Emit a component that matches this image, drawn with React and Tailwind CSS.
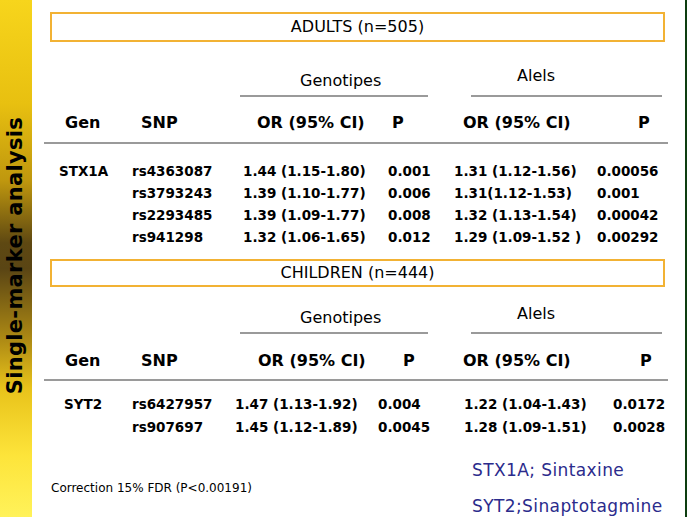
import React from 'react';

const adults = [
  ['STX1A', 'rs4363087', '1.44 (1.15-1.80)', '0.001', '1.31 (1.12-1.56)', '0.00056'],
  ['', 'rs3793243', '1.39 (1.10-1.77)', '0.006', '1.31(1.12-1.53)', '0.001'],
  ['', 'rs2293485', '1.39 (1.09-1.77)', '0.008', '1.32 (1.13-1.54)', '0.00042'],
  ['', 'rs941298', '1.32 (1.06-1.65)', '0.012', '1.29 (1.09-1.52 )', '0.00292'],
];

const children = [
  ['SYT2', 'rs6427957', '1.47 (1.13-1.92)', '0.004', '1.22 (1.04-1.43)', '0.0172'],
  ['', 'rs907697', '1.45 (1.12-1.89)', '0.0045', '1.28 (1.09-1.51)', '0.0028'],
];

const cols = 'grid grid-cols-[86px_102px_144px_74px_142px_76px] ml-[12px] w-[624px]';

const GroupBox = ({ label, className }) => (
  <div className={`ml-[18px] w-[615px] border-2 border-[#f2b234] flex items-center justify-center text-[16px] ${className}`}>
    {label}
  </div>
);

const App = () => (
  <div className="flex h-[517px] w-[689px] overflow-hidden bg-white font-['DejaVu_Sans',sans-serif] text-black">
    <aside className="w-[32px] shrink-0 flex items-center justify-center bg-[linear-gradient(to_bottom,#f7d51c_0%,#e8c010_20%,#bf970e_35%,#5e4812_47%,#5a4514_52%,#a98614_65%,#e8c21a_75%,#fde43a_88%,#fff25a_100%)]">
      <span className="[writing-mode:vertical-rl] rotate-180 whitespace-nowrap text-[21px] font-bold tracking-[0.3px] mb-[6px]">
        Single-marker analysis
      </span>
    </aside>

    <main className="w-[653px] shrink-0 flex flex-col">
      {/* adults */}
      <GroupBox label="ADULTS (n=505)" className="mt-[12px] h-[30px]" />

      <div className="flex ml-[208px] text-[16px] leading-5">
        <div className="w-[188px] h-[55px] border-b-2 border-[#9a9a9a] pt-[29px] pl-[60px]">Genotipes</div>
        <div className="ml-[43px] w-[191px] h-[55px] border-b-2 border-[#9a9a9a] pt-[24px] pl-[46px]">Alels</div>
      </div>

      <div className={`${cols} h-[47px] border-b-2 border-[#9a9a9a] pt-[16px] text-[16px] font-bold leading-5 whitespace-nowrap`}>
        <span className="pl-[21px]">Gen</span>
        <span className="pl-[11px]">SNP</span>
        <span className="pl-[25px]">OR (95% CI)</span>
        <span className="pl-[16px]">P</span>
        <span className="pl-[13px]">OR (95% CI)</span>
        <span className="pl-[46px]">P</span>
      </div>

      <div className="mt-[16px] text-[13.5px] font-bold leading-[22px] whitespace-nowrap">
        {adults.map((r, i) => (
          <div key={i} className={cols}>
            <span className="pl-[15px]">{r[0]}</span>
            <span className="pl-[2px]">{r[1]}</span>
            <span className="pl-[11px]">{r[2]}</span>
            <span className="pl-[12px]">{r[3]}</span>
            <span className="pl-[4px]">{r[4]}</span>
            <span className="pl-[5px]">{r[5]}</span>
          </div>
        ))}
      </div>

      {/* children */}
      <GroupBox label="CHILDREN (n=444)" className="mt-[11px] h-[28px]" />

      <div className="flex ml-[208px] text-[16px] leading-5">
        <div className="w-[188px] h-[47px] border-b-2 border-[#9a9a9a] pt-[21px] pl-[60px]">Genotipes</div>
        <div className="ml-[43px] w-[191px] h-[47px] border-b-2 border-[#9a9a9a] pt-[17px] pl-[46px]">Alels</div>
      </div>

      <div className={`${cols} h-[47px] border-b-2 border-[#9a9a9a] pt-[17px] text-[16px] font-bold leading-5 whitespace-nowrap`}>
        <span className="pl-[21px]">Gen</span>
        <span className="pl-[11px]">SNP</span>
        <span className="pl-[26px]">OR (95% CI)</span>
        <span className="pl-[27px]">P</span>
        <span className="pl-[13px]">OR (95% CI)</span>
        <span className="pl-[48px]">P</span>
      </div>

      <div className="mt-[12px] text-[13.5px] font-bold leading-[23px] whitespace-nowrap">
        {children.map((r, i) => (
          <div key={i} className={cols}>
            <span className="pl-[20px]">{r[0]}</span>
            <span className="pl-[2px]">{r[1]}</span>
            <span className="pl-[3px]">{r[2]}</span>
            <span className="pl-[2px]">{r[3]}</span>
            <span className="pl-[14px]">{r[4]}</span>
            <span className="pl-[21px]">{r[5]}</span>
          </div>
        ))}
      </div>

      {/* footer */}
      <div className="mt-[21px] flex items-center">
        <p className="ml-[19px] w-[421px] text-[12px]">Correction 15% FDR (P&lt;0.00191)</p>
        <div className="flex flex-col gap-[16px] text-[17px] leading-5 tracking-[0.4px] text-[#2b2b8c] whitespace-nowrap">
          <span>STX1A; Sintaxine</span>
          <span>SYT2;Sinaptotagmine</span>
        </div>
      </div>
    </main>

    <div className="w-[2px] shrink-0 bg-[#0d3d10]" />
    <div className="w-[2px] shrink-0" />
  </div>
);

export default App;
